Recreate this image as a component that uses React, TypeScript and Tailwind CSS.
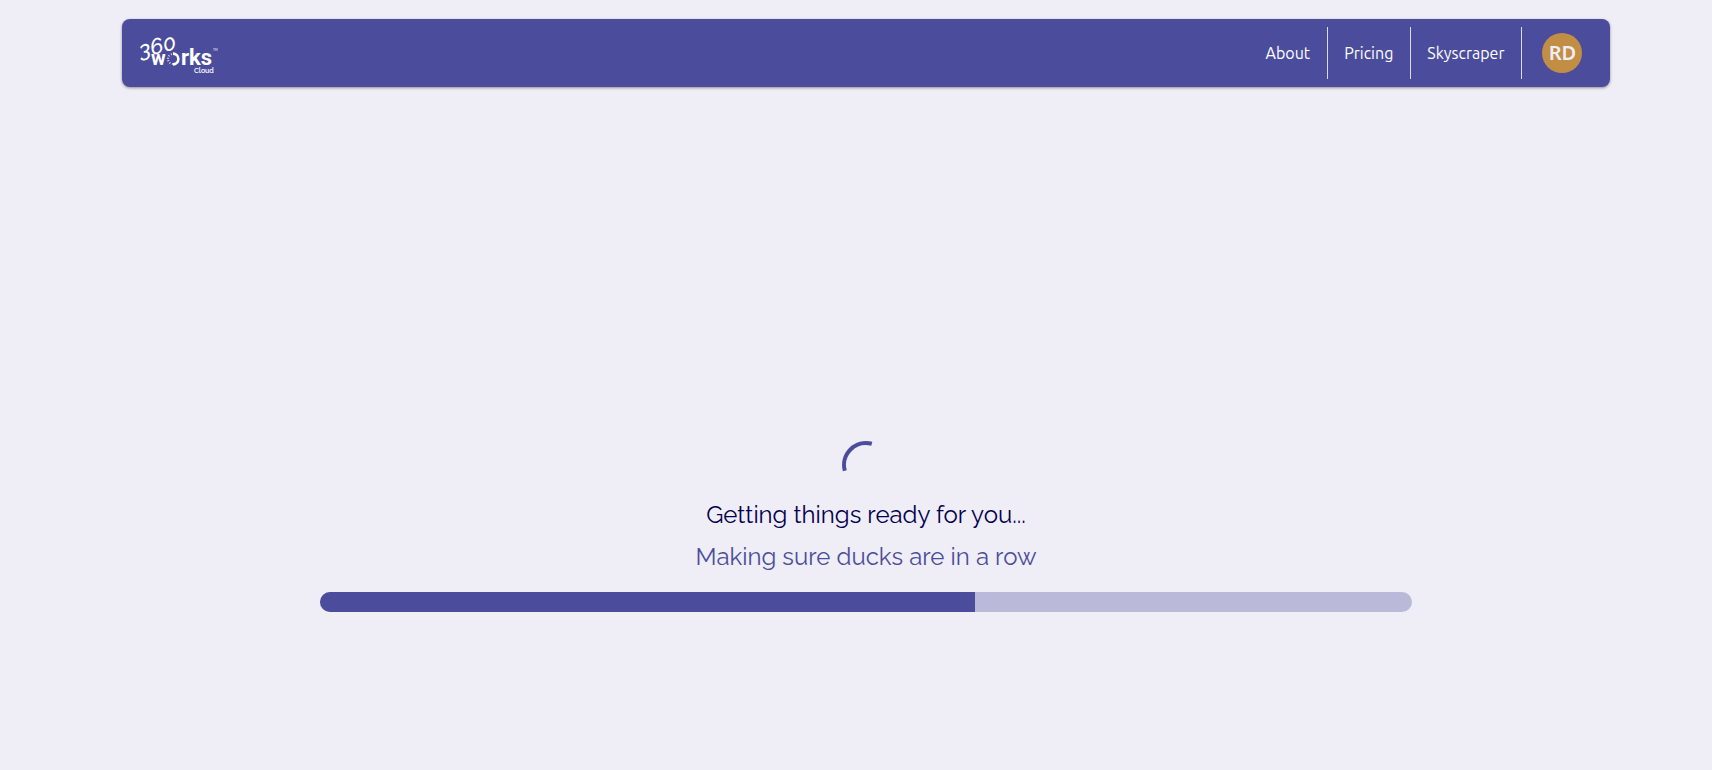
type NavItem = {
  label: string
  href: string
}

const navItems: NavItem[] = [
  { label: 'About', href: '#about' },
  { label: 'Pricing', href: '#pricing' },
  { label: 'Skyscraper', href: '#skyscraper' },
]

function Logo() {
  return (
    <svg
      width="80"
      height="44"
      viewBox="0 0 80 44"
      fill="#fff"
      className="overflow-visible"
      role="img"
      aria-label="360Works Cloud"
    >
      <text
        transform="rotate(-14 3 27)"
        x="3"
        y="27"
        className="font-['Raleway','Lato',sans-serif] text-[22px] font-medium italic"
      >
        360
      </text>
      <text x="13" y="34" className="font-['Roboto',sans-serif] text-[20px] font-bold">
        w
      </text>
      <circle
        cx="35"
        cy="28"
        r="5"
        fill="none"
        stroke="#fff"
        strokeWidth="2"
        strokeDasharray="1 1.6"
        opacity="0.8"
      />
      <path d="M35 22.6a5.4 5.4 0 0 1 0 10.8" fill="none" stroke="#fff" strokeWidth="2.6" />
      <text x="43" y="34" className="font-['Roboto',sans-serif] text-[22px] font-bold">
        rks
      </text>
      <text x="75" y="20" className="font-['Lato',sans-serif] text-[3px]">
        TM
      </text>
      <text x="56" y="42" className="font-['Raleway','Lato',sans-serif] text-[7px] font-semibold">
        Cloud
      </text>
    </svg>
  )
}

function Header() {
  return (
    <header className="flex h-[68px] items-center justify-between rounded-lg bg-[#4b4d9c] pl-4 pr-7 shadow-[0_1px_3px_rgba(0,0,0,0.4)]">
      <a href="#home">
        <Logo />
      </a>
      <div className="flex items-center">
        <nav className="flex">
          {navItems.map((item) => (
            <a
              key={item.label}
              href={item.href}
              className="flex h-[52px] items-center border-r border-[#dcdbec] pl-4 pr-[17px] font-['Ubuntu','Open_Sans',sans-serif] text-base text-white"
            >
              {item.label}
            </a>
          ))}
        </nav>
        <button
          type="button"
          aria-label="Account"
          className="ml-5 flex size-10 items-center justify-center rounded-full bg-[#c18e44] font-['Noto_Sans',sans-serif] text-xl font-semibold text-[#efedf6]"
        >
          RD
        </button>
      </div>
    </header>
  )
}

function Spinner() {
  return (
    <svg width="48" height="48" viewBox="0 0 48 48" fill="none" aria-hidden="true">
      <path d="M2.8 29.8A22 22 0 0 1 29.8 2.8" stroke="#4b4d9c" strokeWidth="4" />
    </svg>
  )
}

function ProgressBar({ percent }: { percent: number }) {
  return (
    <div
      role="progressbar"
      aria-valuenow={percent}
      aria-label="Loading"
      className="h-5 w-full overflow-hidden rounded-full bg-[#bab9da]"
    >
      <div className="h-full bg-[#4b4d9c]" style={{ width: `${percent}%` }} />
    </div>
  )
}

export default function App() {
  return (
    <div className="min-h-screen bg-[#efedf6] pl-5 pt-[19px]">
      <div className="mx-auto w-[88%]">
        <Header />
        <main className="mx-auto mt-[354px] flex w-[73.4%] flex-col items-center text-center font-['Raleway','Lato',sans-serif] text-2xl leading-[42px]">
          <Spinner />
          <p className="mt-[5px] text-[#03004f]">Getting things ready for you...</p>
          <p className="text-[#4b4d9c]">Making sure ducks are in a row</p>
          <div className="mt-[14px] w-full">
            <ProgressBar percent={60} />
          </div>
        </main>
      </div>
    </div>
  )
}
